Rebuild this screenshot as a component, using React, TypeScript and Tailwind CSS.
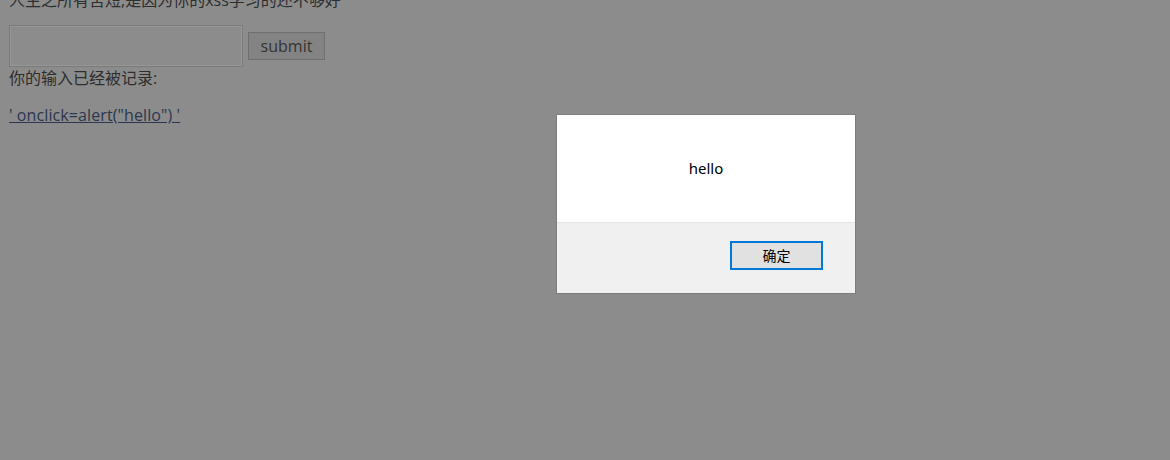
export default function App() {
  return (
    <div
      className="relative w-full h-[460px] overflow-hidden bg-[#8c8c8c] text-[#2e2e2e]"
      style={{ fontFamily: '"Open Sans", "Noto Sans CJK SC", sans-serif' }}
    >
      <div className="pl-[9px] pr-2">
        <div className="mt-[-12px] text-[16px] leading-6">
          人生之所有苦短,是因为你的xss学习的还不够好
        </div>

        <form className="mt-[13px] flex items-center">
          <input className="w-[234px] h-[42px] border border-[#7b7b7b] bg-[#8c8c8c] shadow-[inset_0_0_0_1px_#979797] outline-none" />
          <button
            type="button"
            className="ml-[5px] w-[77px] h-[28px] border border-[#6f6f6f] bg-[#838383] text-[16px] leading-none text-[#333]"
          >
            submit
          </button>
        </form>

        <div className="text-[16px] leading-[22px]">你的输入已经被记录:</div>

        <div className="mt-[15px] text-[16px] leading-[22px] tracking-[0.1px]">
          <a className="underline text-[#2b3650] cursor-pointer">
            ' onclick=alert("hello") '
          </a>
        </div>
      </div>

      {/* alert dialog */}
      <div className="absolute left-[556px] top-[114px] w-[300px] h-[180px] border border-[#7d7d7d] bg-white flex flex-col">
        <div
          className="h-[107px] flex items-center justify-center text-[15px] text-black"
          style={{ fontFamily: '"Noto Sans", "Open Sans", sans-serif' }}
        >
          hello
        </div>
        <div className="flex-1 border-t border-[#e4e4e4] bg-[#f0f0f0] flex justify-end pr-[32px] pt-[18px]">
          <button
            type="button"
            className="w-[93px] h-[29px] border-2 border-[#0078d7] bg-[#e1e1e1] pb-[2px] text-[14px] leading-none text-black"
            style={{ fontFamily: '"Noto Sans CJK SC", sans-serif' }}
          >
            确定
          </button>
        </div>
      </div>
    </div>
  );
}
